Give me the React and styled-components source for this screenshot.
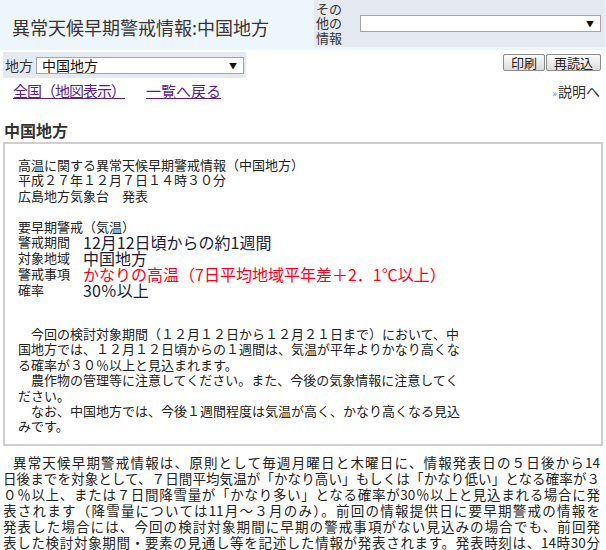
import styled, { createGlobalStyle } from 'styled-components'

const GlobalStyle = createGlobalStyle`
	html, body {
		margin: 0;
		padding: 0;
		background: #fff;
		color: #222;
		font-family: "Noto Sans CJK JP", "Noto Sans", sans-serif;
	}
`

const Page = styled.div`
	width: 606px;
	height: 550px;
	overflow: hidden;
`

const Header = styled.div`
	display: flex;
	align-items: flex-start;
	height: 50px;
	background: #eef6fd;
`

const Title = styled.h1`
	flex: 1;
	margin: 0;
	padding: 16px 0 0 12px;
	font-size: 18px;
	line-height: 22px;
	font-weight: normal;
	color: #3a3333;
`

const OtherBox = styled.div`
	width: 289px;
	height: 47px;
	margin-right: 1px;
	padding-left: 2px;
	display: flex;
	align-items: center;
	background: #e5e9f1;
`

const OtherLabel = styled.div`
	width: 28px;
	font-size: 13px;
	line-height: 14.5px;
	color: #333;
`

const SelectBox = styled.div`
	position: relative;
	box-sizing: border-box;
	width: ${p => p.$width}px;
	height: 17px;
	margin-left: ${p => p.$gap}px;
	padding-left: 5px;
	background: #fff;
	border: 1px solid #a5a5a5;
	font-size: 14px;
	line-height: 15px;
	color: #111;

	&::after {
		content: "▼";
		position: absolute;
		right: 6px;
		top: 0;
		font-size: 8px;
		line-height: 15px;
		color: #111;
	}
`

const ToolRow = styled.div`
	display: flex;
	justify-content: space-between;
	align-items: flex-start;
	margin-top: 2px;
`

const AreaBox = styled.div`
	display: flex;
	align-items: center;
	width: 241px;
	height: 26px;
	margin-left: 3px;
	padding-left: 2px;
	background: #e5e9f1;
	font-size: 14px;
	color: #333;
`

const Buttons = styled.div`
	display: flex;
	gap: 1px;
	margin: 2px 5px 0 0;
`

const Button = styled.button`
	height: 17px;
	padding: 0 7px;
	border: 1px solid #8c8c8c;
	border-radius: 2px;
	background: linear-gradient(#fbfbfb, #dcdcdc);
	font-family: inherit;
	font-size: 13px;
	line-height: 14px;
	color: #222;
`

const LinkRow = styled.div`
	display: flex;
	align-items: center;
	height: 18px;
	margin-top: 4px;
	padding-left: 13px;
	padding-right: 6px;
`

const NavLink = styled.a`
	margin-right: 21px;
	font-size: 15px;
	line-height: 18px;
	letter-spacing: ${p => (p.$tight ? '-1px' : '0')};
	color: #5a1f8e;
	text-decoration: underline;
`

const HelpLink = styled.span`
	margin-left: auto;
	font-size: 14px;
	color: #333;

	&::before {
		content: "»";
		margin-right: 1px;
		font-size: 10px;
		color: #6f86a8;
	}
`

const Heading = styled.h2`
	margin: 20px 0 2px 4px;
	font-size: 16px;
	line-height: 20px;
	font-weight: bold;
	color: #333;
`

const InfoBox = styled.div`
	margin: 0 3px 0 3px;
	padding: 13px 0 10px 13px;
	border: 2px solid #cfcfcf;
	font-size: 13px;
	line-height: 15.4px;
	color: #222;
`

const Lines = styled.div`
	white-space: pre;
`

const Table = styled.div`
	display: grid;
	grid-template-columns: 65px auto;
	grid-auto-rows: 16px;
	align-items: center;
`

const Label = styled.span`
	line-height: 16px;
`

const Value = styled.span`
	font-size: 16px;
	line-height: 16px;
	white-space: nowrap;
	color: ${p => (p.$alert ? '#ff0022' : '#1c1c38')};
`

const Comment = styled.div`
	margin-top: 28px;
	white-space: pre;
`

const Note = styled.div`
	margin: 8px 6px 0 3px;
	font-size: 13.5px;
	line-height: 16px;
	color: #222;
`

const NoteLine = styled.span`
	display: block;
	text-align: justify;
	text-align-last: ${p => (p.$last ? 'left' : 'justify')};
	text-indent: ${p => (p.$indent ? '10px' : '0')};
	white-space: nowrap;
`

const rows = [
	['警戒期間', '12月12日頃からの約1週間'],
	['対象地域', '中国地方'],
	['警戒事項', 'かなりの高温（7日平均地域平年差＋2．1℃以上）', true],
	['確率', '30％以上'],
]

const noteLines = [
	'異常天候早期警戒情報は、原則として毎週月曜日と木曜日に、情報発表日の５日後から14',
	'日後までを対象として、７日間平均気温が「かなり高い」もしくは「かなり低い」となる確率が３',
	'０％以上、または７日間降雪量が「かなり多い」となる確率が30％以上と見込まれる場合に発',
	'表されます（降雪量については11月～３月のみ）。前回の情報提供日に要早期警戒の情報を',
	'発表した場合には、今回の検討対象期間に早期の警戒事項がない見込みの場合でも、前回発',
	'表した検討対象期間・要素の見通し等を記述した情報が発表されます。発表時刻は、14時30分',
	'です。',
]

export default function App() {
	return (
		<Page>
			<GlobalStyle />
			<Header>
				<Title>異常天候早期警戒情報:中国地方</Title>
				<OtherBox>
					<OtherLabel>その<br />他の<br />情報</OtherLabel>
					<SelectBox $width={241} $gap={16} />
				</OtherBox>
			</Header>

			<ToolRow>
				<AreaBox>
					地方
					<SelectBox $width={208} $gap={3}>中国地方</SelectBox>
				</AreaBox>
				<Buttons>
					<Button>印刷</Button>
					<Button>再読込</Button>
				</Buttons>
			</ToolRow>

			<LinkRow>
				<NavLink href="#" $tight>全国（地図表示）</NavLink>
				<NavLink href="#">一覧へ戻る</NavLink>
				<HelpLink>説明へ</HelpLink>
			</LinkRow>

			<Heading>中国地方</Heading>

			<InfoBox>
				<Lines>{`高温に関する異常天候早期警戒情報（中国地方）
平成２７年１２月７日１４時３０分
広島地方気象台　発表

要早期警戒（気温）`}</Lines>
				<Table>
					{rows.map(([label, value, alert]) => [
						<Label key={label}>{label}</Label>,
						<Value key={label + 'v'} $alert={alert}>{value}</Value>,
					])}
				</Table>
				<Comment>{`　今回の検討対象期間（１２月１２日から１２月２１日まで）において、中
国地方では、１２月１２日頃からの１週間は、気温が平年よりかなり高くな
る確率が３０％以上と見込まれます。
　農作物の管理等に注意してください。また、今後の気象情報に注意してく
ださい。
　なお、中国地方では、今後１週間程度は気温が高く、かなり高くなる見込
みです。`}</Comment>
			</InfoBox>

			<Note>
				{noteLines.map((line, i) => (
					<NoteLine key={i} $indent={i === 0} $last={i === noteLines.length - 1}>
						{line}
					</NoteLine>
				))}
			</Note>
		</Page>
	)
}
